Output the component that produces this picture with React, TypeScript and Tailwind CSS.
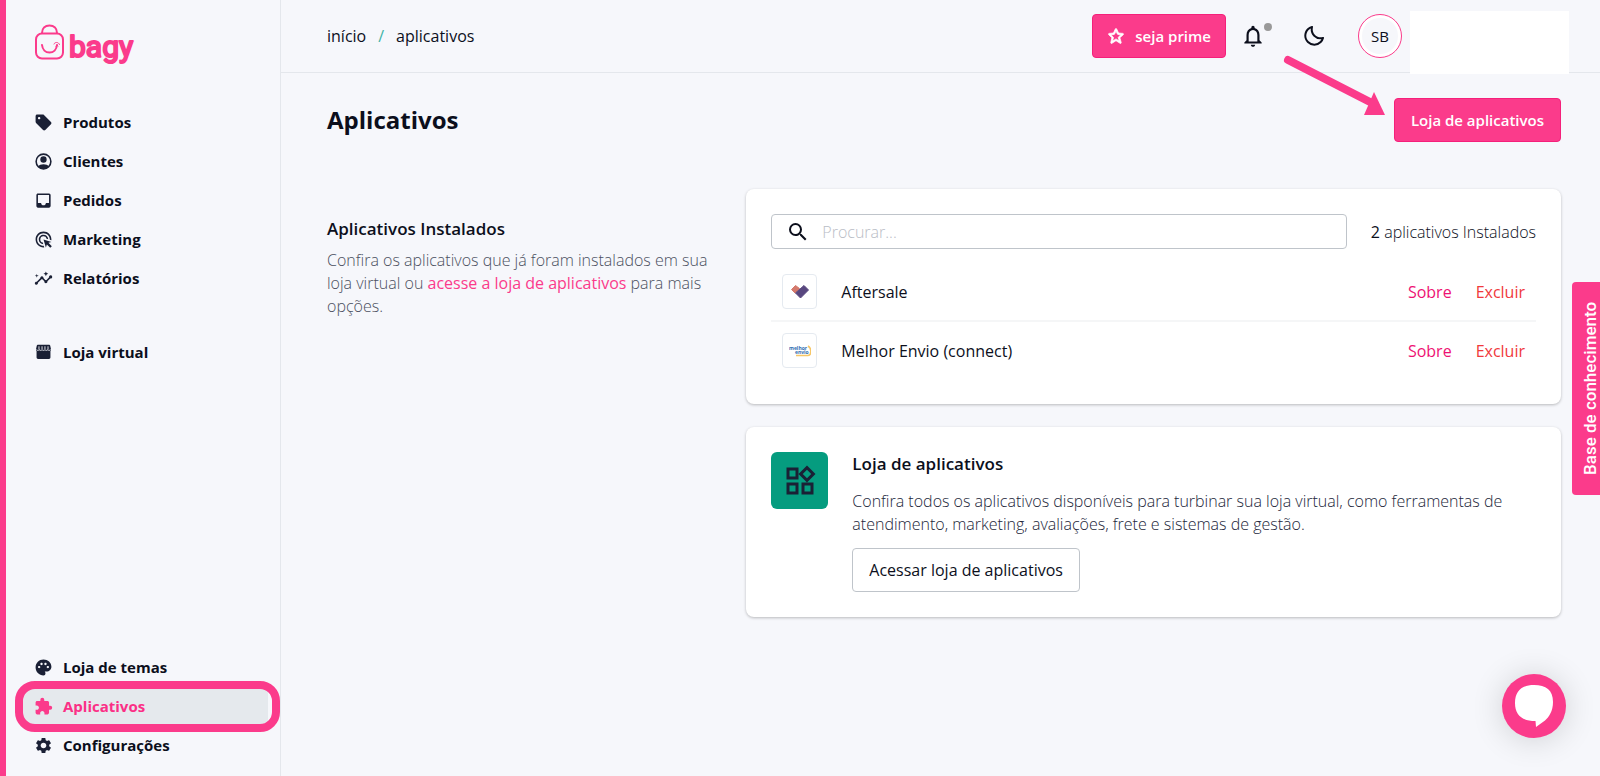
import { BiMoon, BiStar } from "react-icons/bi"
import {
  MdAdsClick,
  MdExtension,
  MdInbox,
  MdInsights,
  MdNotificationsNone,
  MdOutlineWidgets,
  MdPalette,
  MdSearch,
  MdSell,
  MdSettings,
} from "react-icons/md"
import type { ComponentType, ReactNode } from "react"

interface navItemProps {
  icon: ComponentType<{ className?: string }>
  name: string
  active?: boolean
}

interface appProps {
  name: string
  logo: ReactNode
}

const AccountIcon = ({ className }: { className?: string }) => (
  <svg viewBox="0 0 24 24" fill="currentColor" className={className}>
    <circle cx="12" cy="12" r="9.300" fill="none" stroke="currentColor" strokeWidth="2" />
    <circle cx="12" cy="9.500" r="4" />
    <path d="M5 18.500c1.500-1.900 4-3 7-3s5.500 1.100 7 3c-1.700 1.900-4.200 3-7 3s-5.300-1.100-7-3Z" />
  </svg>
)

const StoreIcon = ({ className }: { className?: string }) => (
  <svg viewBox="-1 0 26 26" fill="currentColor" className={className}>
    <path d="M4.6 2.5h14.8c.9 0 1.6.6 1.8 1.4l1 4.4c.2 1-.1 2-.7 2.7V20a2 2 0 0 1-2 2h-15a2 2 0 0 1-2-2v-9c-.6-.7-.9-1.7-.7-2.7l1-4.4c.2-.8.9-1.4 1.8-1.4Z" />
    <path
      d="M5.800 4.500v4M10 4.500v4M14 4.500v4M18.200 4.500v4M2.500 9c1 1.500 3 1.500 3.500 0 1 1.500 3 1.500 4 0 1 1.500 3 1.500 4 0 1 1.500 3 1.500 4 0 .5 1.500 2.500 1.500 3.500 0"
      fill="none"
      stroke="#f6f7fb"
      strokeWidth="1.2"
    />
  </svg>
)

const mainNav: navItemProps[] = [
  { icon: MdSell, name: "Produtos" },
  { icon: AccountIcon, name: "Clientes" },
  { icon: MdInbox, name: "Pedidos" },
  { icon: MdAdsClick, name: "Marketing" },
  { icon: MdInsights, name: "Relatórios" },
]

const storeNav: navItemProps[] = [{ icon: StoreIcon, name: "Loja virtual" }]

const footerNav: navItemProps[] = [
  { icon: MdPalette, name: "Loja de temas" },
  { icon: MdExtension, name: "Aplicativos", active: true },
  { icon: MdSettings, name: "Configurações" },
]

const apps: appProps[] = [
  {
    name: "Aftersale",
    logo: (
      <svg viewBox="0 0 20 16" strokeWidth="1" strokeLinejoin="round" className="w-5 h-4">
        <path d="M1.500 5.500 5.500 1.500 9.500 4.500 5 9Z" fill="#d4796c" stroke="#d4796c" />
        <path d="M14 1.500 18.500 6 10.500 14 5.500 9Z" fill="#58477f" stroke="#58477f" />
      </svg>
    ),
  },
  {
    name: "Melhor Envio (connect)",
    logo: (
      <svg viewBox="0 0 22 12" className="w-[22px] h-3">
        <path d="M19 1c3.500 2 4 9 0 9.500H7" fill="none" stroke="#f6c667" strokeWidth="1.500" />
        <text x="0" y="5" fontSize="5" fontWeight="700" fill="#2f6cb0">
          melhor
        </text>
        <text x="6" y="9" fontSize="5" fontWeight="700" fill="#2f6cb0">
          envio
        </text>
      </svg>
    ),
  },
]

const Logo = () => (
  <a href="#" aria-label="bagy">
    <svg viewBox="0 0 104 46" fill="none" stroke="#fb3b8b" strokeLinecap="round" className="w-[104px] h-[46px]">
      <rect x="1" y="10.500" width="27" height="25" rx="6" strokeWidth="2" />
      <path d="M7 10c0-4.500 3-7.500 7.500-7.500S22 5.500 22 10" strokeWidth="2" />
      <path d="M7 22c.5 4.500 3.500 7.500 7.500 7.500s7-3 7.500-7.500" strokeWidth="2" />
      <path d="M19 21c.5-2 4.500-2.500 5.500.5M21 23c.5-1 1.500-1 2 0" strokeWidth="1" />
      <text
        x="34"
        y="34"
        fontFamily="Roboto, sans-serif"
        fontSize="30"
        fontWeight="400"
        fill="#fb3b8b"
        strokeWidth="2"
        strokeLinejoin="round"
      >
        bagy
      </text>
    </svg>
  </a>
)

const NavList = ({ items }: { items: navItemProps[] }) => (
  <ul className="flex flex-col gap-1">
    {items.map(({ icon: Icon, name, active }) => (
      <li key={name} className="relative">
        <a
          href="#"
          aria-current={active ? "page" : undefined}
          className={
            active
              ? "flex items-center gap-[10px] h-[35px] pl-[11px] rounded bg-[#e5e9ed] text-[#fb2f86]"
              : "flex items-center gap-[10px] h-[35px] pl-[11px]"
          }
        >
          <Icon className="size-[19px] shrink-0 text-[#1a2035] in-aria-[current=page]:text-[#fb3b8b]" />
          <span>{name}</span>
        </a>
        {active && (
          <span className="absolute -inset-y-2 -left-2 -right-3 border-8 border-[#fb3b8b] rounded-[20px] pointer-events-none" />
        )}
      </li>
    ))}
  </ul>
)

const Sidebar = () => (
  <aside className="flex flex-col w-[281px] shrink-0 border-l-[6px] border-l-[#fb3b8b] border-r border-r-[#e4e7ec] pt-[23px] pb-[13px]">
    <div className="pl-[29px]">
      <Logo />
    </div>
    <nav className="flex flex-col flex-1 pl-[17px] pr-3 pt-9 text-[15px] font-bold text-[#0c0f1c]">
      <NavList items={mainNav} />
      <div className="mt-[39px]">
        <NavList items={storeNav} />
      </div>
      <div className="mt-auto">
        <NavList items={footerNav} />
      </div>
    </nav>
  </aside>
)

const Header = () => (
  <header className="flex items-center h-[73px] pl-[46px] pr-[31px] border-b border-[#e4e7ec]">
    <nav className="flex items-center gap-3 text-base">
      <a href="#">início</a>
      <span className="text-[#3fb3a6]">/</span>
      <a href="#">aplicativos</a>
    </nav>
    <div className="flex items-center ml-auto">
      <button className="flex items-center gap-[10px] h-11 px-[14px] rounded bg-[#fb3b8b] border border-[#f5207a] text-[15px] font-semibold text-white">
        <BiStar className="size-[18px] stroke-1" />
        seja prime
      </button>
      <button aria-label="Notificações" className="relative ml-[14px]">
        <MdNotificationsNone className="size-[26px]" />
        <span className="absolute top-0 -right-1.5 size-2 rounded-full bg-[#999999]" />
      </button>
      <button aria-label="Modo escuro" className="ml-9">
        <BiMoon className="size-6" />
      </button>
      <button className="flex items-center justify-center size-11 ml-8 rounded-full border border-[#fb3b8b] bg-white text-[15px]">
        <span className="flex items-center justify-center size-9 rounded-full bg-[#f6f7fb]">SB</span>
      </button>
      <div className="w-[159px] h-[63px] ml-2 mt-3 bg-white" />
    </div>
  </header>
)

const InstalledCard = () => (
  <section className="p-[25px] bg-white rounded-lg shadow-[0_1px_3px_rgba(0,0,0,0.25)]">
    <div className="flex items-center gap-6">
      <label className="flex items-center flex-1 h-[35px] px-[14px] border border-[#bfc4ca] rounded">
        <MdSearch className="size-6 shrink-0" />
        <input
          type="search"
          aria-label="Procurar"
          placeholder="Procurar..."
          className="w-full ml-3 bg-transparent outline-none text-base font-light placeholder:text-[#b9bdc6]"
        />
      </label>
      <p className="text-base font-light">
        <span className="font-medium">2</span> aplicativos Instalados
      </p>
    </div>
    <ul className="mt-[14px] divide-y-2 divide-[#f5f6f7]">
      {apps.map(({ name, logo }) => (
        <li key={name} className="flex items-center py-[11px] px-[11px] text-base">
          <span className="flex items-center justify-center size-[35px] mr-6 border border-[#e5eaf0] rounded">
            {logo}
          </span>
          <span>{name}</span>
          <a href="#" className="ml-auto text-[#ee1273]">
            Sobre
          </a>
          <a href="#" className="ml-6 text-[#f0393c]">
            Excluir
          </a>
        </li>
      ))}
    </ul>
  </section>
)

const StoreCard = () => (
  <section className="flex gap-6 p-[25px] bg-white rounded-lg shadow-[0_1px_3px_rgba(0,0,0,0.25)]">
    <span className="flex items-center justify-center size-[57px] shrink-0 rounded-md bg-[#059c7f] text-[#1a2035]">
      <MdOutlineWidgets className="size-9" />
    </span>
    <div>
      <h2 className="text-[17px] leading-6 font-semibold">Loja de aplicativos</h2>
      <p className="mt-[14px] mb-3 text-base leading-[23px] font-light text-[#22263a]">
        Confira todos os aplicativos disponíveis para turbinar sua loja virtual, como ferramentas de
        atendimento, marketing, avaliações, frete e sistemas de gestão.
      </p>
      <button className="h-11 px-4 border border-[#bfc4ca] rounded text-base">
        Acessar loja de aplicativos
      </button>
    </div>
  </section>
)

export const App = () => {
  return (
    <div className="relative flex min-h-screen overflow-hidden bg-[#f6f7fb] text-[#0c0f1c] font-['Open_Sans',sans-serif]">
      <Sidebar />

      <div className="flex-1 min-w-0">
        <Header />
        <main className="pl-[46px] pr-[39px] pt-[25px]">
          <div className="flex items-center justify-between">
            <h1 className="text-2xl font-bold">Aplicativos</h1>
            <div className="relative">
              <button className="h-11 px-4 rounded bg-[#fb3b8b] border border-[#f5207a] text-[15px] font-semibold text-white">
                Loja de aplicativos
              </button>
              {/* arrow pointing at the button */}
              <svg viewBox="0 0 104 62" className="absolute right-full -top-11 mr-2 w-[104px] h-[62px]">
                <path d="M6 6 88 48" stroke="#fb3b8b" strokeWidth="8" strokeLinecap="round" />
                <path d="M92 38 103 61H82Z" fill="#fb3b8b" />
              </svg>
            </div>
          </div>

          <div className="grid grid-cols-[1fr_2fr] gap-3 mt-[47px]">
            <div className="pt-7 pr-6">
              <h2 className="text-[17px] leading-6 font-semibold">Aplicativos Instalados</h2>
              <p className="mt-2 text-base leading-[23px] font-light text-[#4b5060]">
                Confira os aplicativos que já foram instalados em sua loja virtual ou{" "}
                <a href="#" className="font-medium text-[#fb3b8b]">
                  acesse a loja de aplicativos
                </a>{" "}
                para mais opções.
              </p>
            </div>
            <div className="flex flex-col gap-[23px]">
              <InstalledCard />
              <StoreCard />
            </div>
          </div>
        </main>
      </div>

      <button className="absolute -right-2 top-[282px] h-[213px] w-9 rounded-r bg-[#fb3b8b] rotate-180 [writing-mode:vertical-rl] font-[Roboto] text-[17px] leading-5 font-medium text-white">
        Base de conhecimento
      </button>

      <button
        aria-label="Chat"
        className="absolute right-[34px] bottom-[38px] flex items-center justify-center size-16 rounded-full bg-[#fb3b8b] shadow-[0_2px_32px_rgba(0,0,0,0.16)]"
      >
        <svg viewBox="0 0 38 42" className="w-[38px] h-[42px]">
          <path
            d="M19 0C31 0 38 5 38 17c0 9-4 15-8 18.500L21 42l-.5-6C7 36 0 30 0 18S7 0 19 0Z"
            fill="#fff"
          />
        </svg>
      </button>
    </div>
  )
}

export default App
